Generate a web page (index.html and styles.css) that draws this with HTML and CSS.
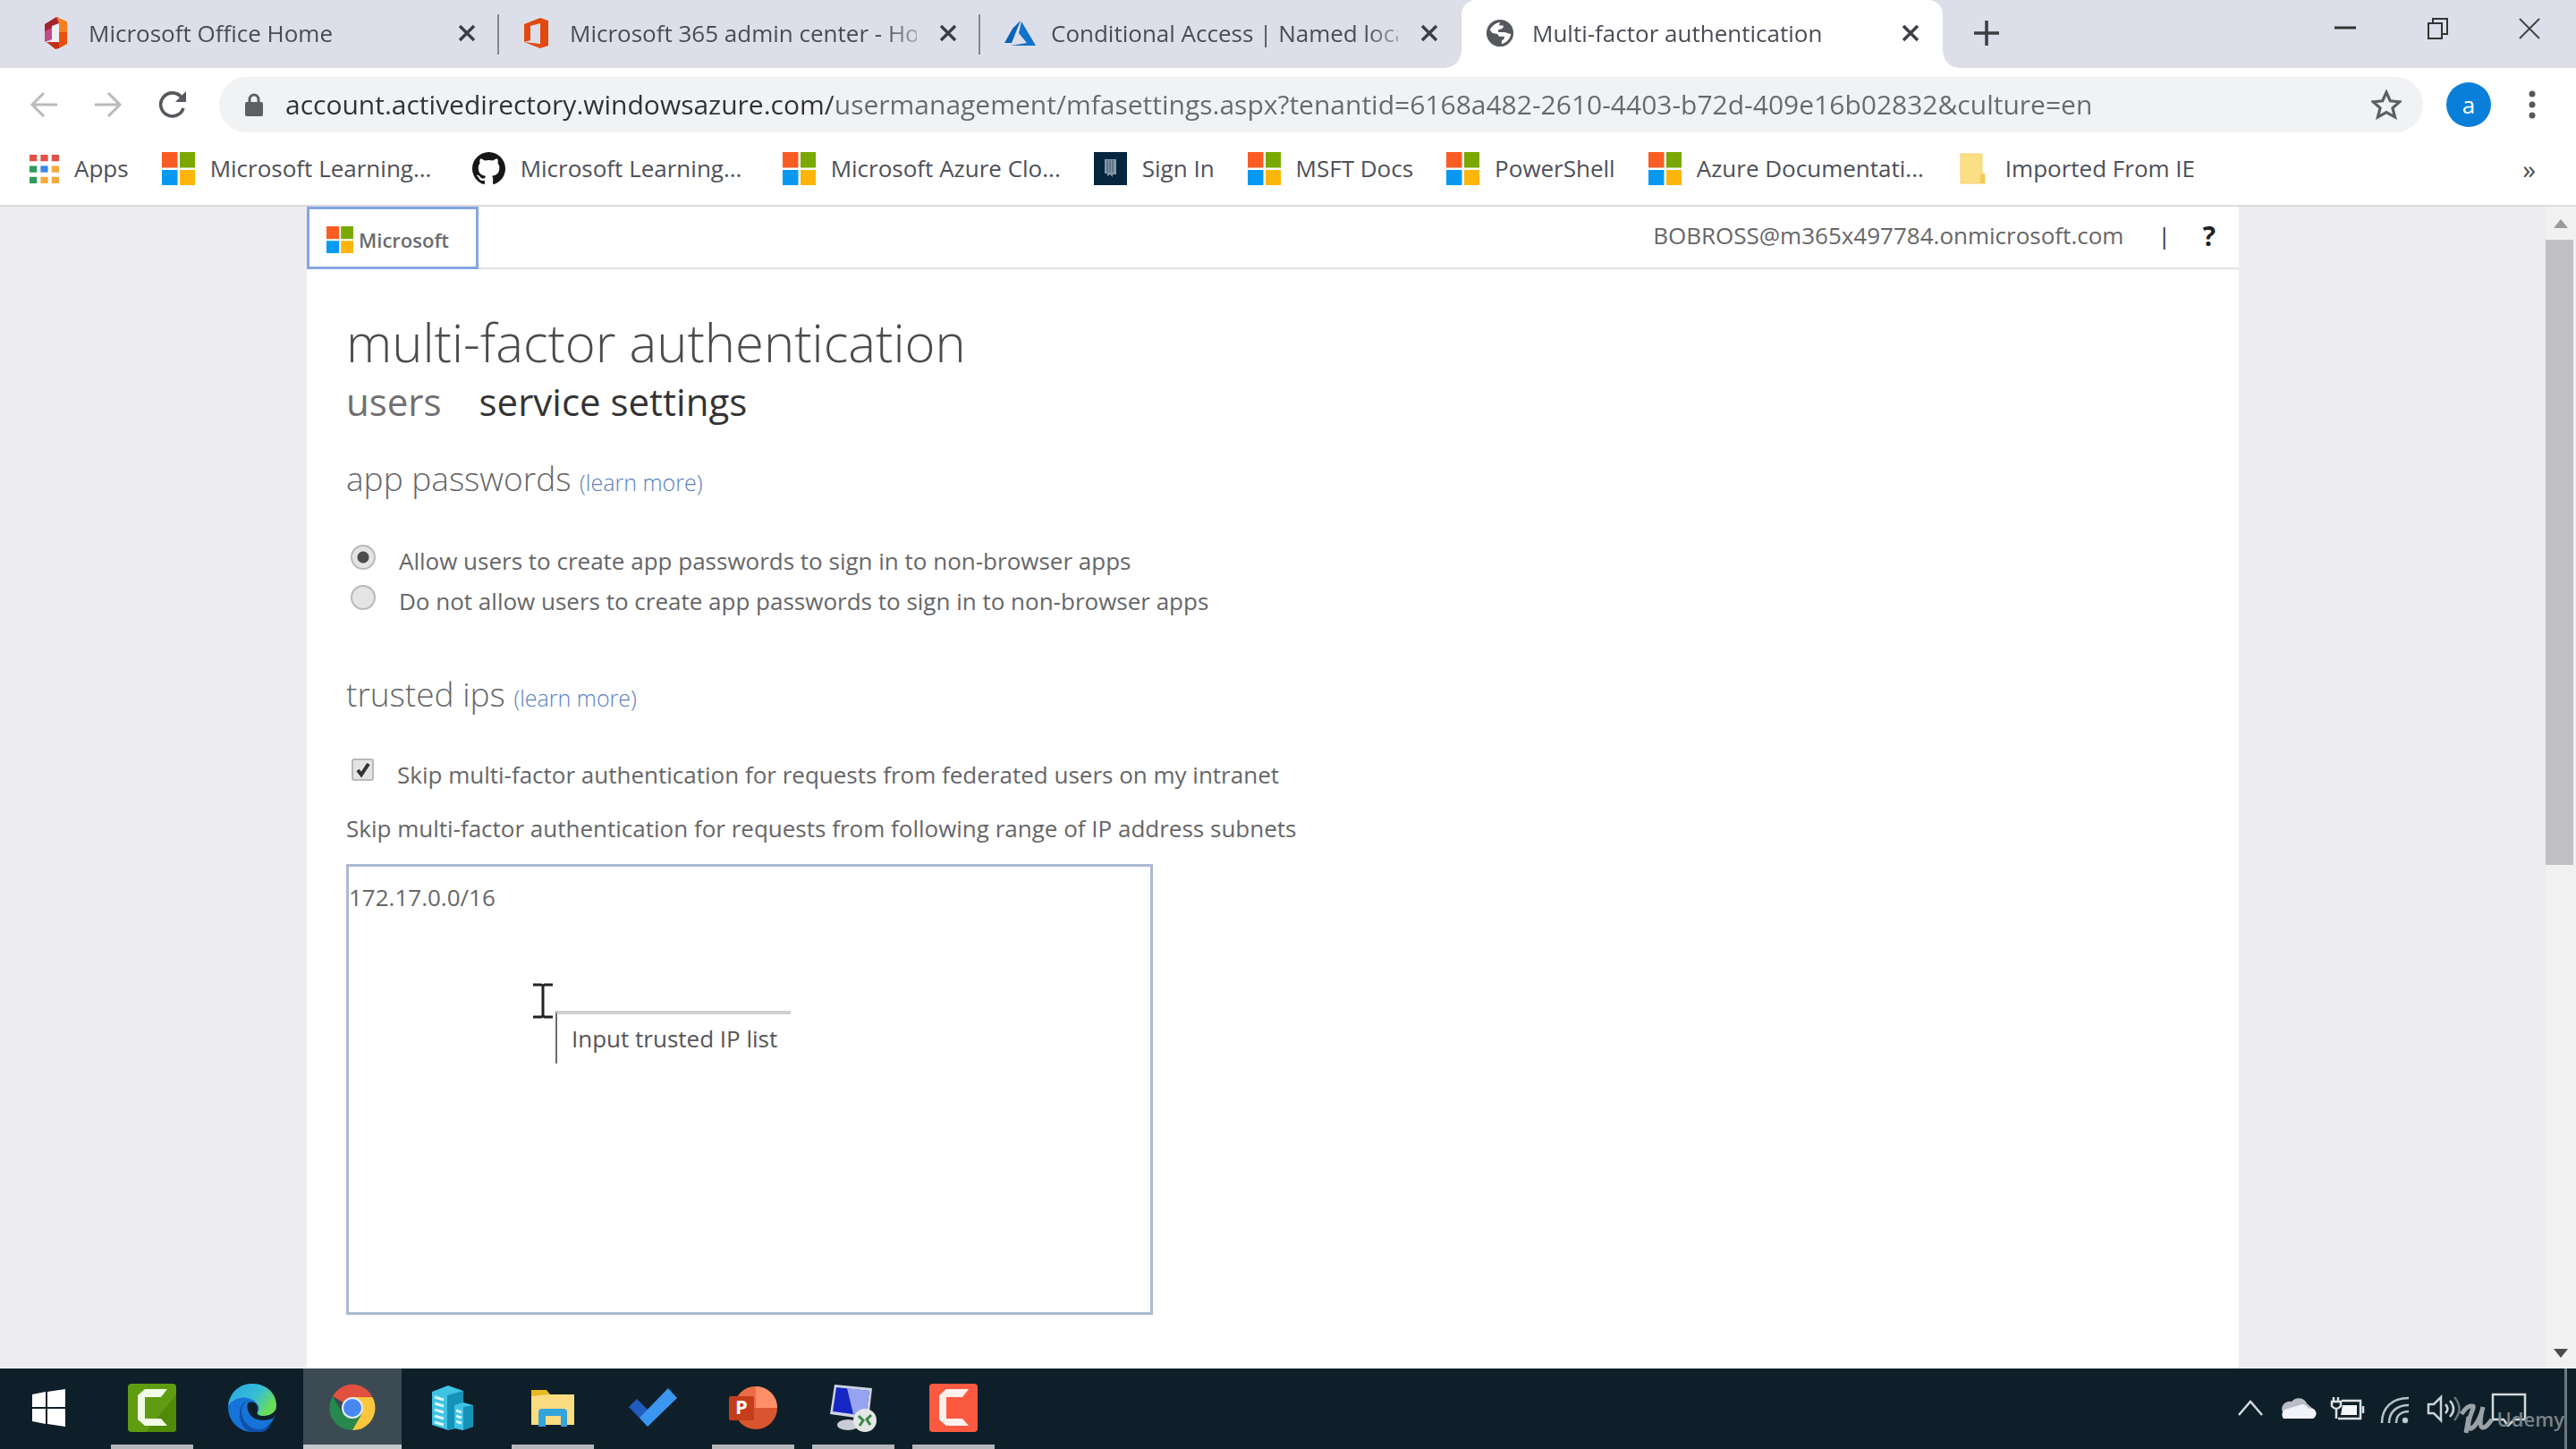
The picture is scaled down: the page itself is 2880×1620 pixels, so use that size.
FILE: index.html
```html
<!DOCTYPE html>
<html lang="en">
<head>
<meta charset="utf-8">
<meta name="viewport" content="width=device-width, initial-scale=1">
<title>Multi-factor authentication</title>
<link rel="stylesheet" href="styles.css">
</head>
<body>
<svg class="sprite" aria-hidden="true">
  <symbol id="ms" viewBox="0 0 37 37">
    <path fill="#fa5c24" d="M0 0h17.500v17.500H0z"/><path fill="#7ba800" d="M20 0h17v17.500H20z"/>
    <path fill="#0799f2" d="M0 20h17.500v17H0z"/><path fill="#fdb50a" d="M20 20h17v17H20z"/>
  </symbol>
  <symbol id="x" viewBox="0 0 20 20"><path d="M2 2l16 16M18 2L2 18" fill="none" stroke="#3c3e43" stroke-width="3.400"/></symbol>
</svg>

<header class="tabstrip">
  <div class="tab">
    <svg class="fav" viewBox="0 0 32 36"><path fill="#eef0f6" d="M10 10l9-3v21l-9 1z"/><path fill="#a3242c" d="M3 8l13-8 3 1v6l-8 3v6l-8 4z"/><path fill="#c24a86" d="M3 16l8-4v13l-8 3z"/><path fill="#f5801f" d="M16 0l12 5v13h-9V7z"/><path fill="#e8500f" d="M19 17h9v13l-9 5z"/><path fill="#c2301c" d="M5 28h14v7l-4 1z"/></svg>
    <a class="tab-title" href="#">Microsoft Office Home</a>
    <button class="close" aria-label="Close tab"><svg><use href="#x"/></svg></button>
  </div>
  <div class="tab">
    <svg class="fav" viewBox="0 0 32 36"><path fill="#e2490f" fill-rule="evenodd" d="M1 8L19 1l9 3v28l-9 3L1 28l18 2V7L8 10v16l-7 2z"/></svg>
    <a class="tab-title" href="#">Microsoft 365 admin center - Ho</a>
    <button class="close" aria-label="Close tab"><svg><use href="#x"/></svg></button>
  </div>
  <div class="tab tab-last">
    <svg class="fav fav-wide" viewBox="0 0 36 32"><path fill="#0a63b8" d="M18 2L9 11 0 27h8z"/><path fill="#1272cc" d="M19 3l16 27H7l18-3-9-11z"/></svg>
    <a class="tab-title" href="#">Conditional Access | Named loca</a>
    <button class="close" aria-label="Close tab"><svg><use href="#x"/></svg></button>
  </div>
  <div class="tab tab-active">
    <svg class="fav" viewBox="0 0 34 34"><circle cx="17" cy="17" r="16" fill="#55585d"/><path fill="#fff" d="M5 13c3-5 7-8 12-9l-1 4h4c2 0 1 3-1 4l-4 1v3h6c4 0 5 2 9 2-1 6-5 10-11 12v-4l3-2v-3h-6l-2-3-6-1z"/></svg>
    <a class="tab-title" href="#">Multi-factor authentication</a>
    <button class="close" aria-label="Close tab"><svg><use href="#x"/></svg></button>
  </div>
  <button class="newtab" aria-label="New tab"><svg viewBox="0 0 28 28"><path d="M14 0v28M0 14h28" stroke="#3b3d42" stroke-width="3.500"/></svg></button>
  <div class="window-controls">
    <button aria-label="Minimize"><svg viewBox="0 0 24 24"><path d="M0 11h24" stroke="#333" stroke-width="3"/></svg></button>
    <button aria-label="Restore"><svg viewBox="0 0 24 24" fill="none" stroke="#333" stroke-width="2"><path d="M2 6h15v17H2zM7 6V1h16v17h-6"/></svg></button>
    <button aria-label="Close"><svg viewBox="0 0 24 24"><path d="M1 1l22 22M23 1L1 23" stroke="#444" stroke-width="2"/></svg></button>
  </div>
</header>

<div class="toolbar">
  <button class="nav" aria-label="Back"><svg viewBox="0 0 32 32" fill="none" stroke="#b8babd" stroke-width="3"><path d="M31 16H3M16 3L3 16l13 13"/></svg></button>
  <button class="nav" aria-label="Forward"><svg viewBox="0 0 32 32" fill="none" stroke="#b8babd" stroke-width="3"><path d="M1 16h28M16 3l13 13-13 13"/></svg></button>
  <button class="nav" aria-label="Reload"><svg viewBox="0 0 32 32"><path d="M28 20a13 13 0 1 1-2-12" fill="none" stroke="#55585c" stroke-width="3.600"/><path d="M31 1v12H19z" fill="#55585c"/></svg></button>
  <div class="omnibox">
    <svg class="lock" viewBox="0 0 20 26"><path d="M5 11V7a5 5 0 0 1 10 0v4" fill="none" stroke="#5c5f64" stroke-width="3"/><rect y="10" width="20" height="16" rx="2" fill="#5c5f64"/></svg>
    <input class="url" type="text" aria-label="Address" value="account.activedirectory.windowsazure.com/usermanagement/mfasettings.aspx?tenantid=6168a482-2610-4403-b72d-409e16b02832&amp;culture=en">
    <button class="star" aria-label="Bookmark this page"><svg viewBox="0 0 32 32"><path d="M16 3l4 9 10 1-7.500 6.500L25 29l-9-5-9 5 2.500-9.500L2 13l10-1z" fill="none" stroke="#5c5f64" stroke-width="3"/></svg></button>
  </div>
  <button class="avatar" aria-label="Profile">a</button>
  <button class="menu" aria-label="Menu"><svg viewBox="0 0 8 32" fill="#55585c"><circle cx="4" cy="4" r="3.500"/><circle cx="4" cy="16" r="3.500"/><circle cx="4" cy="28" r="3.500"/></svg></button>
</div>

<nav class="bookmarks">
  <a class="bm bm-apps" href="#"><svg viewBox="0 0 32 32"><path fill="#e25146" d="M0 1h8v7H0zM12 1h8v7h-8zM24 1h8v7h-8z"/><path fill="#2f9a5c" d="M0 13h8v7H0zM0 25h8v7H0z"/><path fill="#3b86e8" d="M12 13h8v7h-8z"/><path fill="#f2ab3c" d="M24 13h8v7h-8zM12 25h8v7h-8zM24 25h8v7h-8z"/></svg><span>Apps</span></a>
  <a class="bm bm-long" href="#"><svg><use href="#ms"/></svg><span>Microsoft Learning...</span></a>
  <a class="bm bm-long" href="#"><svg viewBox="0 0 16 16"><path fill="#171717" d="M8 0C3.580 0 0 3.580 0 8c0 3.540 2.290 6.530 5.470 7.590.4.070.55-.17.55-.38 0-.19-.01-.82-.01-1.490-2.010.37-2.530-.49-2.690-.94-.09-.23-.48-.94-.82-1.130-.28-.15-.68-.52-.01-.53.63-.01 1.080.58 1.230.82.72 1.210 1.870.87 2.330.66.070-.52.280-.87.510-1.070-1.780-.2-3.640-.89-3.640-3.950 0-.87.310-1.590.82-2.150-.08-.2-.36-1.020.08-2.120 0 0 .67-.21 2.200.82.640-.18 1.320-.27 2-.27s1.360.09 2 .27c1.530-1.040 2.200-.82 2.200-.82.440 1.100.160 1.920.080 2.120.510.560.820 1.270.820 2.150 0 3.070-1.870 3.750-3.650 3.950.290.250.540.730.540 1.480 0 1.070-.01 1.930-.01 2.200 0 .21.150.46.550.38A8.010 8.010 0 0 0 16 8c0-4.420-3.580-8-8-8z"/></svg><span>Microsoft Learning...</span></a>
  <a class="bm" href="#"><svg><use href="#ms"/></svg><span>Microsoft Azure Clo...</span></a>
  <a class="bm" href="#"><svg viewBox="0 0 37 37"><path fill="#06263f" d="M0 0h37v37H0z"/><path fill="#8497a7" d="M12 8h13v17h-4v3l-3-3-3 2v-3h-3z"/><path stroke="#39536a" d="M15 9v14M18 9v14M21 9v14"/></svg><span>Sign In</span></a>
  <a class="bm" href="#"><svg><use href="#ms"/></svg><span>MSFT Docs</span></a>
  <a class="bm" href="#"><svg><use href="#ms"/></svg><span>PowerShell</span></a>
  <a class="bm" href="#"><svg><use href="#ms"/></svg><span>Azure Documentati...</span></a>
  <a class="bm" href="#"><svg viewBox="0 0 37 37"><path fill="#fbdf85" stroke="#f3d36b" d="M4 2h24v21l3 2v10H4z"/><path fill="#f1cc5d" d="M26 24l5 1v10h-5z"/></svg><span>Imported From IE</span></a>
  <button class="more" aria-label="More bookmarks">»</button>
</nav>

<div class="viewport">
  <main class="page">
    <div class="topbar">
      <a class="logo" href="#"><svg><use href="#ms"/></svg><span>Microsoft</span></a>
      <div class="account"><span>BOBROSS@m365x497784.onmicrosoft.com</span><span class="bar">|</span><a class="help" href="#">?</a></div>
    </div>
    <div class="content">
      <h1>multi-factor authentication</h1>
      <nav class="subnav"><a href="#">users</a><a class="current" href="#">service settings</a></nav>

      <h2>app passwords <a href="#">(learn more)</a></h2>
      <div class="options">
        <label class="option"><input type="radio" name="app" checked><span>Allow users to create app passwords to sign in to non-browser apps</span></label>
        <label class="option"><input type="radio" name="app"><span>Do not allow users to create app passwords to sign in to non-browser apps</span></label>
      </div>

      <h2 class="second">trusted ips <a href="#">(learn more)</a></h2>
      <label class="option skip"><input type="checkbox" checked><span>Skip multi-factor authentication for requests from federated users on my intranet</span></label>
      <label class="range" for="ips">Skip multi-factor authentication for requests from following range of IP address subnets</label>
      <div class="ipbox">
        <textarea id="ips" spellcheck="false">172.17.0.0/16</textarea>
        <div class="tooltip" role="tooltip">Input trusted IP list</div>
        <svg class="caret" viewBox="0 0 22 40"><path d="M0 2h9l2 1 2-1h9M0 38h9l2-1 2 1h9M11 3v34" fill="none" stroke="#222" stroke-width="3"/></svg>
      </div>
    </div>
  </main>
  <div class="scrollbar">
    <svg viewBox="0 0 16 10"><path d="M0 10L8 0l8 10z" fill="#9b9b9d"/></svg>
    <div class="track"><div class="thumb"></div></div>
    <svg viewBox="0 0 16 10"><path d="M0 0h16L8 10z" fill="#4b4b4d"/></svg>
  </div>
</div>

<footer class="taskbar">
  <button class="task start" aria-label="Start"><svg viewBox="0 0 54 54"><path fill="#fff" d="M8 12l15-3v17H8zM25 9l20-3v20H25zM8 28h15v17L8 42zM25 28h20v20l-20-3z"/></svg></button>
  <button class="task open" aria-label="Camtasia"><svg viewBox="0 0 54 54"><rect width="54" height="54" rx="4" fill="#5f9c12"/><path fill="#4f8a08" d="M20 54L54 12v38a4 4 0 0 1-4 4z"/><path fill="#f2fbe6" d="M44 6l-7 9H19v24h18l7 8H19l-8-7V13l8-7z"/></svg></button>
  <button class="task" aria-label="Edge"><svg viewBox="0 0 54 54"><defs><linearGradient id="eg" x1="0" x2="1" y2=".5"><stop stop-color="#2aa4e4"/><stop offset=".6" stop-color="#35bfd6"/><stop offset="1" stop-color="#6bdc55"/></linearGradient></defs><circle cx="27" cy="27" r="27" fill="#1673d8"/><path fill="url(#eg)" d="M0 25C2 8 14 0 27 0c16 0 27 11 27 24 0 9-7 12-14 12-5 0-8-2-7-4 4-5 0-12-8-15C16 13 5 17 0 25z"/><path fill="#0f4fa8" d="M22 18c-9 6-9 20-1 27 8 8 20 8 27 0-6 14-24 11-29 5-9-9-8-28 3-32z"/><path fill="#0f1f29" d="M33 26c-1-5-7-7-11-4-2 6 2 16 11 18 7 2 12 0 17-1l4-6v-5c-4 7-10 8-15 8s-8-2-6-5z"/></svg></button>
  <button class="task open active" aria-label="Chrome"><svg viewBox="0 0 54 54"><path fill="#e2513f" d="M27 27L5 14a25 25 0 0 1 44 0z"/><path fill="#fcc73e" d="M27 27V15h22.400A25 25 0 0 1 27 52z"/><path fill="#27894e" d="M16 33L5 14a25 25 0 0 0 22 38l11-19z"/><circle cx="27" cy="27" r="12" fill="#e6ecf5"/><circle cx="27" cy="27" r="10" fill="#4787f3"/></svg></button>
  <button class="task" aria-label="Server Manager"><svg viewBox="0 0 54 54"><path fill="#3fc3e4" d="M4 9L22 2l17 6v13l11 3v24l-12 4-8-2-8 2L4 46z"/><path fill="#1492b8" d="M21 13l18-5v13l-10 3v26l-8 2zM39 26l11-2v24l-11 4z"/><path d="M7 15l10 3M7 22l10 3M7 29l10 3M7 36l10 3M7 43l10 3M31 30l6 2M31 36l6 2M31 42l6 2" stroke="#d8f6ff" stroke-width="3"/></svg></button>
  <button class="task open" aria-label="File Explorer"><svg viewBox="0 0 54 54"><path fill="#e8b923" d="M3 7h17l4 5h12v10H3z"/><path fill="#fbdc80" d="M3 14l18-2h30v34H3z"/><path fill="#35a3dc" d="M11 48V32q0-4 4-4h24q4 0 4 4v16h-7V36H19v12z"/></svg></button>
  <button class="task" aria-label="To Do"><svg viewBox="0 0 54 54"><path fill="#1f5cc0" d="M0 26l9-9 14 14-2 17z"/><path fill="#3a96ee" d="M21 48l-9-10L44 5l10 11z"/></svg></button>
  <button class="task open" aria-label="PowerPoint"><svg viewBox="0 0 54 54"><circle cx="30" cy="27" r="24" fill="#d9552f"/><path fill="#ff8f68" d="M30 3a24 24 0 0 1 24 24H30z"/><path fill="#ec6c47" d="M30 3v24H6A24 24 0 0 1 30 3z"/><rect y="14" width="28" height="27" rx="2" fill="#c43e1c"/><text x="14" y="34" class="ppt" text-anchor="middle">P</text></svg></button>
  <button class="task open" aria-label="Remote Desktop"><svg viewBox="0 0 54 54"><ellipse cx="21" cy="46" rx="12" ry="6" fill="#c9ccd4"/><path fill="#cfd4e2" d="M6 1l42 4-4 35L1 34z"/><path fill="#1727c6" d="M8 4l37 4-4 28L4 31z"/><path fill="#96a3f0" d="M20 5l25 3-4 28-14-2z"/><circle cx="40" cy="41" r="13" fill="#e3e6e4"/><path d="M33 36l5 5-4 6M47 35l-5 5 4 6" fill="none" stroke="#388a42" stroke-width="3"/></svg></button>
  <button class="task open" aria-label="Camtasia Recorder"><svg viewBox="0 0 54 54"><rect width="54" height="54" rx="4" fill="#fb5a40"/><path fill="#fff0ec" d="M44 6l-7 9H19v24h18l7 8H19l-8-7V13l8-7z"/></svg></button>
  <div class="tray">
    <button aria-label="Show hidden icons"><svg viewBox="0 0 40 40"><path d="M7 27l13-15 13 15" fill="none" stroke="#d4dade" stroke-width="2.500"/></svg></button>
    <button aria-label="OneDrive"><svg viewBox="0 0 40 40"><path fill="#b9bcc5" d="M1 21a9 9 0 0 1 11-9 10 10 0 0 1 17 2l9 8-14 4H3z"/><path fill="#f2f3f8" d="M3 31a7 7 0 0 1 1-10l20-6a9 9 0 0 1 7 5 6 6 0 0 1 5 11z"/></svg></button>
    <button aria-label="Battery"><svg viewBox="0 0 40 40" fill="none" stroke="#dce1e4" stroke-width="2.500"><path d="M14 11h21v20H10M5 7v5M10 7v5M3 12h10v5q-5 6-10 0zM8 20v11M38 17v8"/><path fill="#f4f6f7" stroke="none" d="M15 16h16v11H13z"/></svg></button>
    <button aria-label="Network"><svg viewBox="0 0 40 40" fill="none" stroke="#b8c2c8" stroke-width="2.500"><path d="M5 36C5 19 16 8 35 8M13 36c0-12 8-20 22-20M21 36c0-8 5-13 14-13"/><circle cx="31" cy="33" r="2" fill="#fff"/></svg></button>
    <button aria-label="Volume"><svg viewBox="0 0 40 40" fill="none" stroke="#cbd2d6" stroke-width="2.500"><path d="M3 15h6l8-8v26l-8-8H3zM22 15q5 5 0 10M27 11q8 9 0 18"/><path d="M32 7q11 13 0 26" stroke="#66747c"/></svg></button>
    <button class="notify" aria-label="Notifications"><svg viewBox="0 0 40 40"><path d="M2 4h36v28H26l-7 7-5-7H2z" fill="none" stroke="#d3d9dc" stroke-width="2.500"/></svg></button>
  </div>
  <div class="watermark"><svg viewBox="0 0 38 34"><path d="M2 12Q9 1 15 3c2 1-7 16-5 23 3 8 13-8 16-22-3 12-4 22-1 23 4 1 8-5 11-9M10 15L7 33" fill="none" stroke="#9aa2a6" stroke-width="5"/></svg><span>Udemy</span></div>
</footer>
</body>
</html>
```

FILE: styles.css
```css
* { box-sizing: border-box; }
html, body { height: 100%; }
body {
  margin: 0;
  display: flex;
  flex-direction: column;
  overflow: hidden;
  background: #fff;
  color: #666668;
  font: 26px/45px "Open Sans", "Noto Sans", sans-serif;
}
a { color: inherit; text-decoration: none; }
button { margin: 0; padding: 0; border: 0; background: none; color: inherit; font: inherit; display: grid; place-items: center; }
svg { display: block; flex: none; }
.sprite { position: absolute; width: 0; height: 0; }

/* tabs */
.tabstrip { display: flex; flex: none; height: 76px; padding-left: 20px; background: #dcdfe9; border-bottom: 2px solid #dcdde2; color: #4a4c55; }
.tab { position: relative; display: flex; align-items: center; width: 538px; padding: 0 25px 0 27px; }
.tab:not(.tab-last):not(.tab-active)::after { content: ""; position: absolute; right: 0; top: 16px; width: 2px; height: 45px; background: #85878f; }
.fav { width: 32px; height: 36px; margin-right: 20px; }
.fav-wide { width: 36px; margin-right: 16px; }
.tab-title { flex: 1; min-width: 0; white-space: nowrap; mask-image: linear-gradient(to right, #000 350px, transparent 410px); }
.close { width: 22px; height: 22px; margin-left: 24px; }
.close svg { width: 20px; height: 20px; }
.tab-active { height: 76px; padding-bottom: 2px; background: #fff; border-radius: 16px 16px 0 0; }
.tab-active::before, .tab-active::after { content: ""; position: absolute; bottom: 0; width: 18px; height: 18px; }
.tab-active::before { right: 100%; background: radial-gradient(circle at 0 0, transparent 17px, #fff 18px); }
.tab-active::after { left: 100%; background: radial-gradient(circle at 100% 0, transparent 17px, #fff 18px); }
.newtab { width: 28px; margin-left: 35px; }
.newtab svg { width: 28px; height: 28px; }
.window-controls { display: flex; gap: 79px; margin-left: auto; padding: 0 40px 10px 0; }
.window-controls svg { width: 24px; height: 24px; }

/* toolbar */
.toolbar { display: flex; flex: none; align-items: center; height: 82px; padding: 0 45px 0 33px; }
.nav { width: 32px; height: 32px; margin-right: 40px; }
.nav svg { width: 32px; height: 32px; }
.omnibox { display: flex; flex: 1; align-items: center; height: 62px; margin-left: -4px; padding: 0 24px 0 29px; border-radius: 31px; background: #f1f2f4; }
.lock { width: 20px; height: 26px; }
.url {
  flex: 1; min-width: 0; height: 50px; margin-left: 25px; padding: 0; border: 0; outline: 0;
  font: 30px/50px "Open Sans", "Noto Sans", sans-serif; color: transparent;
  background: linear-gradient(to right, #2f3136 612px, #66696e 612px); background-clip: text;
}
.star svg { width: 34px; height: 34px; }
.avatar { width: 50px; height: 50px; margin: 0 42px 0 26px; border-radius: 50%; background: #0a7fd9; color: #fff; }
.menu svg { width: 8px; height: 32px; }

/* bookmarks */
.bookmarks { display: flex; flex: none; align-items: center; gap: 37px; height: 73px; padding: 0 45px 10px 33px; border-bottom: 2px solid #dcdcde; color: #4e5058; white-space: nowrap; }
.bm { display: flex; align-items: center; gap: 17px; }
.bm svg { width: 37px; height: 37px; }
.bm-apps svg { width: 33px; height: 33px; }
.bm-long { width: 310px; }
.more { margin-left: auto; font-size: 30px; }

/* page */
.viewport { display: flex; flex: 1; min-height: 0; background: #ededef; }
.page { width: 75%; margin: 0 auto; background: #fff; overflow: hidden; }
.topbar { display: flex; justify-content: space-between; height: 70px; border-bottom: 2px solid #e2e2e3; }
.logo { display: flex; align-items: center; gap: 6px; width: 192px; height: 70px; padding: 4px 0 0 19px; border: 3px solid #86a5e4; font-size: 22px; font-weight: 600; color: #6b6b6d; }
.logo svg { width: 30px; height: 30px; }
.account { display: flex; align-items: center; padding: 0 26px 3px 0; }
.bar { margin: 0 36px 0 38px; color: #333; }
.help { color: #222; font-size: 30px; font-weight: 700; }
.content { padding: 42px 44px 0; }
h1, h2 { margin: 0; font-weight: 300; }
h1 { font-size: 58px; line-height: 80px; color: #4c4c4e; }
.subnav { display: flex; gap: 42px; font-size: 42px; line-height: 52px; color: #707072; }
.current { color: #333335; }
h2 { margin-top: 36px; font-size: 37px; line-height: 48px; }
h2 a { font-size: 25px; line-height: 1; color: #5a7fbf; }
.options { margin-top: 46px; }
.second { margin-top: 57px; }
.option { display: flex; align-items: center; }
.option input { appearance: none; flex: none; width: 28px; height: 28px; margin: 0 26px 10px 5px; border: 2px solid #b9b9bb; background: #e4e4e5; }
.option input[type="radio"] { border-radius: 50%; }
.option input[type="radio"]:checked { background: radial-gradient(circle, #4c4c4e 6px, #e4e4e5 7px); }
.option input[type="checkbox"] {
  width: 25px; height: 25px; margin: 0 26px 12px 6px; border-radius: 3px;
  background: #e4e4e5 url("data:image/svg+xml,%3Csvg xmlns='http://www.w3.org/2000/svg' viewBox='0 0 20 20'%3E%3Cpath d='M4 10l4 5 8-12' fill='none' stroke='%23333' stroke-width='4'/%3E%3C/svg%3E") center / 20px no-repeat;
}
.skip { margin-top: 44px; }
.range { display: block; margin-top: 15px; }
.ipbox { position: relative; width: 902px; margin-top: 17px; }
textarea { display: block; width: 100%; height: 504px; padding: 12px 0; border: 3px solid #adb9d3; outline: 0; resize: none; background: #fff; color: inherit; font: inherit; }
.tooltip { position: absolute; left: 234px; top: 164px; width: 263px; height: 59px; padding-left: 16px; border-left: 2px solid #6d6d6f; border-top: 4px solid #cfcfd0; background: #fff; line-height: 54px; color: #555557; }
.caret { position: absolute; left: 209px; top: 133px; width: 22px; height: 40px; }

/* scrollbar */
.scrollbar { display: flex; flex-direction: column; align-items: center; width: 34px; padding: 14px 0 12px; background: #f1f1f2; }
.scrollbar svg { width: 16px; height: 10px; }
.track { flex: 1; width: 100%; padding: 13px 3px 13px 0; }
.thumb { height: 57%; background: #c1c1c3; }

/* taskbar */
.taskbar { position: relative; display: flex; flex: none; height: 90px; background: #0f1f29; }
.task { width: 112px; padding-top: 2px; border-bottom: 5px solid transparent; background-clip: padding-box; }
.task svg { width: 54px; height: 54px; }
.start { width: 114px; padding-right: 4px; }
.open { background: linear-gradient(#b4b8bb, #b4b8bb) center bottom / 92px 5px no-repeat border-box; }
.active { background: linear-gradient(#c4c8ca, #c4c8ca) center bottom / 110px 5px no-repeat border-box, linear-gradient(#3c4a53, #3c4a53) center / 110px 100% no-repeat border-box; }
.ppt { font-size: 22px; font-weight: 700; fill: #fff; }
.tray { display: flex; align-items: center; gap: 14px; margin-left: auto; border-right: 3px solid #6c787f; margin-right: 10px; }
.tray svg { width: 40px; height: 40px; }
.notify { margin-left: 19px; margin-right: 42px; }
.watermark { position: absolute; right: 13px; bottom: 17px; display: flex; align-items: center; gap: 4px; font-size: 22px; line-height: 30px; font-weight: 600; color: #78838a; }
.watermark svg { width: 38px; height: 34px; }
```
